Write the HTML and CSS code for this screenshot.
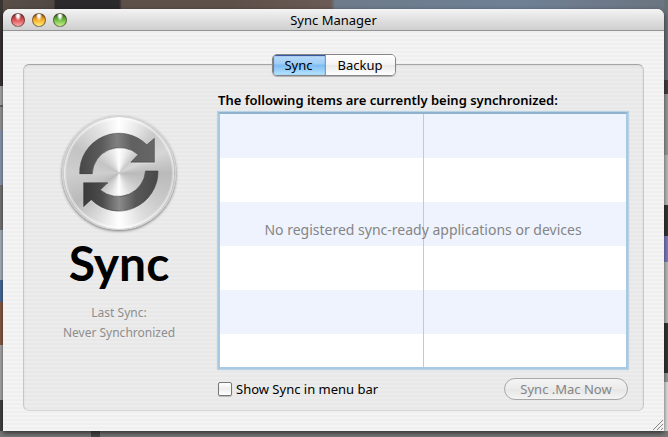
FILE: index.html
```
<!DOCTYPE html>
<html lang="en">
<head>
<meta charset="utf-8">
<title>Sync Manager</title>
<link rel="stylesheet" href="styles.css">
</head>
<body>
<div class="window">
	<div class="titlebar">
		<div class="lights">
			<button type="button" class="light red" aria-label="Close"></button>
			<button type="button" class="light yellow" aria-label="Minimize"></button>
			<button type="button" class="light green" aria-label="Zoom"></button>
		</div>
		<h1>Sync Manager</h1>
	</div>
	<div class="content">
		<div class="panel">
			<div class="tabs">
				<button type="button" class="tab selected">Sync</button>
				<button type="button" class="tab">Backup</button>
			</div>
			<div class="columns">
				<div class="sidebar">
					<div class="disc">
						<svg viewBox="1 1 114 114" aria-hidden="true">
							<defs>
								<linearGradient id="top" x1="0" y1="0" x2="1" y2="0">
									<stop offset="0" stop-color="#484848"/>
									<stop offset="0.3" stop-color="#5c5c5c"/>
									<stop offset="0.5" stop-color="#808080"/>
									<stop offset="0.7" stop-color="#606060"/>
									<stop offset="1" stop-color="#666"/>
								</linearGradient>
								<linearGradient id="bottom" x1="0" y1="0" x2="1" y2="0">
									<stop offset="0" stop-color="#3a3a3a"/>
									<stop offset="0.25" stop-color="#4c4c4c"/>
									<stop offset="0.48" stop-color="#8a8a8a"/>
									<stop offset="0.7" stop-color="#585858"/>
									<stop offset="1" stop-color="#484848"/>
								</linearGradient>
							</defs>
							<g fill="#fff" opacity="0.7" transform="translate(0 1)">
								<path d="M18 59A40 40 0 0 1 86.3 29.3L94 22.7V47H70L77.3 39.3A28 28 0 0 0 30.7 59Z"/>
								<path d="M97.7 56A40 40 0 0 1 29.7 85.3L22 92.3V68H46.7L39 75.3A28 28 0 0 0 85 56Z"/>
							</g>
							<path fill="url(#top)" stroke="#444" stroke-width="0.6" d="M18 59A40 40 0 0 1 86.3 29.3L94 22.7V47H70L77.3 39.3A28 28 0 0 0 30.7 59Z"/>
							<path fill="url(#bottom)" stroke="#3a3a3a" stroke-width="0.6" d="M97.7 56A40 40 0 0 1 29.7 85.3L22 92.3V68H46.7L39 75.3A28 28 0 0 0 85 56Z"/>
						</svg>
					</div>
					<h2>Sync</h2>
					<p class="status">Last Sync:<br>Never Synchronized</p>
				</div>
				<div class="main">
					<p class="heading">The following items are currently being synchronized:</p>
					<div class="list">
						<p class="empty">No registered sync-ready applications or devices</p>
					</div>
					<div class="footer">
						<label class="check"><input type="checkbox">Show Sync in menu bar</label>
						<button type="button" class="push" disabled>Sync .Mac Now</button>
					</div>
				</div>
			</div>
		</div>
	</div>
	<svg class="grip" viewBox="0 0 12 12" aria-hidden="true">
		<path d="M1 11L11 1M5 11L11 5M9 11L11 9" stroke="#858585" fill="none"/>
	</svg>
</div>
</body>
</html>
```
FILE: styles.css
```
*
{
	box-sizing:border-box;
}
body
{
	margin:0;
	min-height:100vh;
	display:flex;
	padding:9px 4px 6px 3px;
	font:13px/20px "Noto Sans", "Lucida Grande", sans-serif;
	color:#000;
	/* desktop showing round the window */
	background:
		linear-gradient(90deg, #777 0 91px, #484848 91px 100px, #777 100px) bottom / 100% 6px no-repeat,
		linear-gradient(#3a3433 86px, #aaa 86px 105px, #666 105px 107px, #999 107px 130px, #8d9bb0 130px 185px, #777 185px 230px, #aab4c0 230px 280px, #4a6a9c 280px 302px, #8a5a44 302px 345px, #aaa 345px 400px, #444 400px) left / 3px 100% no-repeat,
		linear-gradient(#667079 80px, #443f3f 80px 94px, #999 94px 155px, #bbb 155px 205px, #333 205px 236px, #7c7cc0 236px 262px, #bbb 262px 323px, #333 323px 373px, #999 373px 382px, #ddd 382px) right / 4px 100% no-repeat,
		linear-gradient(90deg, #5a4e48, #514844 54px, #2b292b 55px 119px, #5d5049 122px 230px, #6b5a55 331px, #6d7b8a 335px, #6f8095 520px, #6b7480);
}
h1, h2, p
{
	margin:0;
	font-weight:normal;
}
button, input
{
	font:inherit;
	margin:0;
	padding:0;
}
.window
{
	flex:1;
	display:flex;
	flex-direction:column;
	position:relative;
	border-radius:7px 7px 0 0;
	background:repeating-linear-gradient(#f4f4f4 0 2px, #efefef 2px 4px);
	box-shadow:0 2px 5px rgba(0,0,0,0.6);
}
.titlebar
{
	display:grid;
	grid-template-columns:1fr auto 1fr;
	align-items:center;
	height:22px;
	padding:0 8px;
	border-bottom:1px solid #949494;
	border-radius:7px 7px 0 0;
	background:linear-gradient(#f4f4f4, #e4e4e4 40%, #cfcfcf);
}
.titlebar h1
{
	font-size:13px;
}
.lights
{
	display:flex;
	gap:7px;
}
.light
{
	width:14px;
	height:14px;
	border:1px solid rgba(60,40,40,0.6);
	border-radius:50%;
}
.red
{
	background:radial-gradient(ellipse at 50% 12%, #fff 0 12%, transparent 38%), linear-gradient(#7c2f2f, #d84c4c 45%, #ffaaa6);
}
.yellow
{
	background:radial-gradient(ellipse at 50% 12%, #fff 0 12%, transparent 38%), linear-gradient(#8a4b14, #f5a623 45%, #fff27c);
}
.green
{
	background:radial-gradient(ellipse at 50% 12%, #fff 0 12%, transparent 38%), linear-gradient(#2d5a1c, #69b53c 45%, #c8f58c);
}
.content
{
	flex:1;
	display:flex;
	padding:33px 20px 20px;
}
.panel
{
	flex:1;
	display:flex;
	flex-direction:column;
	border:1px solid #c6c6c6;
	border-top-color:#a4a4a4;
	border-bottom-color:#d6d6d6;
	border-radius:6px;
	background:repeating-linear-gradient(#ececec 0 2px, #e8e8e8 2px 4px);
	box-shadow:inset 0 1px 2px rgba(0,0,0,0.08);
}
.tabs
{
	align-self:center;
	display:flex;
	height:22px;
	margin-top:-11px;
	border:1px solid #858585;
	border-radius:5px;
	overflow:hidden;
	box-shadow:0 1px 1px rgba(0,0,0,0.25);
}
.tab
{
	width:69px;
	border:0;
	line-height:18px;
	background:linear-gradient(#fff, #f4f4f4 48%, #e9e9e9 52%, #fff);
}
.tab.selected
{
	width:53px;
	border-right:1px solid #7d9cc4;
	background:linear-gradient(#bcdcf8, #a0cdf6 45%, #7dbbf2 50%, #b4e4ff);
	box-shadow:inset 0 1px 1px #2b4a9a, inset 1px 0 1px #5c7fc0;
}
.columns
{
	flex:1;
	display:flex;
	padding:14px 15px 10px 0;
}
.sidebar
{
	width:194px;
	padding:26px 4px 0 0;
	display:flex;
	flex-direction:column;
	align-items:center;
	text-align:center;
}
.disc
{
	width:114px;
	height:114px;
	border:1px solid #d0d0d0;
	border-radius:50%;
	background:
		radial-gradient(circle, transparent 0 66%, rgba(255,255,255,0.6) 69%, transparent 70%),
		conic-gradient(#fff 0deg, #ececec 18deg, #cacaca 42deg, #d6d6d6 65deg, #bababa 90deg, #cacaca 125deg, #dcdcdc 150deg, #fff 180deg, #dcdcdc 205deg, #bababa 235deg, #cecece 270deg, #c4c4c4 300deg, #e2e2e2 335deg, #fff 360deg);
	box-shadow:0 1px 3px rgba(0,0,0,0.5);
}
.disc svg
{
	display:block;
	width:100%;
}
.sidebar h2
{
	margin-top:3px;
	font:bold 48px/60px Lato, "Trebuchet MS", sans-serif;
}
.status
{
	margin-top:10px;
	font-size:12px;
	color:#8e8e8e;
}
.main
{
	flex:1;
	display:flex;
	flex-direction:column;
}
.heading
{
	font-size:13px;
	font-weight:600;
}
.list
{
	flex:1;
	margin:2px 0 9px;
	padding-top:106px;
	border:2px solid #a9c9e2;
	border-top-color:#8fb3cd;
	text-align:center;
	color:#858585;
	/* column divider over the striped rows */
	background:
		linear-gradient(#c3c8d4, #c3c8d4) 50% 0 / 1px 100% no-repeat,
		repeating-linear-gradient(#eff3fe 0 44px, #fff 44px 88px);
	box-shadow:0 0 1px 1px #b9d2e4;
}
.empty
{
	font-size:14px;
}
.footer
{
	display:flex;
	justify-content:space-between;
	align-items:center;
}
.check
{
	display:flex;
	align-items:center;
	gap:4px;
}
.check input
{
	appearance:none;
	width:14px;
	height:14px;
	border:1px solid #777;
	border-radius:2px;
	background:linear-gradient(#fff, #eee 50%, #fff);
	box-shadow:0 1px 1px rgba(0,0,0,0.2);
}
.check input:checked
{
	background:#5c9be0;
}
.push
{
	width:124px;
	height:22px;
	border:1px solid #a8a8a8;
	border-radius:11px;
	line-height:18px;
	color:#858585;
	background:linear-gradient(#f4f4f4, #ebebeb 50%, #e6e6e6 50%, #f4f4f4);
}
.grip
{
	position:absolute;
	right:0;
	bottom:0;
	width:12px;
	height:12px;
}
```
